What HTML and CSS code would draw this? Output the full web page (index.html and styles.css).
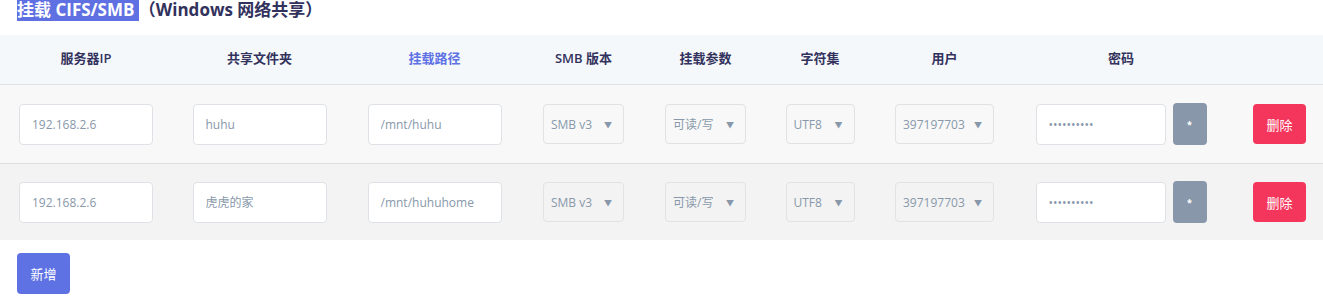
FILE: index.html
```html
<!DOCTYPE html>
<html lang="zh-CN">
<head>
    <meta charset="UTF-8">
    <meta name="viewport" content="width=device-width, initial-scale=1.0">
    <title>挂载 CIFS/SMB</title>
    <link rel="stylesheet" href="styles.css">
</head>
<body>
    <h2 class="page-title"><span class="title-mark">挂载 CIFS/SMB&nbsp;</span>（Windows 网络共享）</h2>

    <div class="mount-table">
        <div class="mount-head">
            <div class="head-cell">服务器IP</div>
            <div class="head-cell">共享文件夹</div>
            <div class="head-cell active">挂载路径</div>
            <div class="head-cell">SMB 版本</div>
            <div class="head-cell">挂载参数</div>
            <div class="head-cell">字符集</div>
            <div class="head-cell">用户</div>
            <div class="head-cell">密码</div>
            <div class="head-cell"></div>
        </div>

        <div class="mount-row">
            <div class="cell"><input class="field w-text" type="text" value="192.168.2.6"></div>
            <div class="cell"><input class="field w-text" type="text" value="huhu"></div>
            <div class="cell"><input class="field w-text" type="text" value="/mnt/huhu"></div>
            <div class="cell">
                <div class="select-wrap w-smb"><select class="choice"><option>SMB v3</option><option>SMB v2</option><option>SMB v1</option></select></div>
            </div>
            <div class="cell">
                <div class="select-wrap w-mode"><select class="choice"><option>可读/写</option><option>只读</option></select></div>
            </div>
            <div class="cell">
                <div class="select-wrap w-charset"><select class="choice"><option>UTF8</option><option>GBK</option></select></div>
            </div>
            <div class="cell">
                <div class="select-wrap w-user"><select class="choice"><option>397197703</option></select></div>
            </div>
            <div class="cell">
                <div class="pass-group">
                    <input class="field w-pass" type="password" value="1234567890">
                    <button class="btn btn-toggle">*</button>
                </div>
            </div>
            <div class="cell cell-end"><button class="btn btn-danger">删除</button></div>
        </div>

        <div class="mount-row alt">
            <div class="cell"><input class="field w-text" type="text" value="192.168.2.6"></div>
            <div class="cell"><input class="field w-text" type="text" value="虎虎的家"></div>
            <div class="cell"><input class="field w-text" type="text" value="/mnt/huhuhome"></div>
            <div class="cell">
                <div class="select-wrap w-smb"><select class="choice"><option>SMB v3</option><option>SMB v2</option><option>SMB v1</option></select></div>
            </div>
            <div class="cell">
                <div class="select-wrap w-mode"><select class="choice"><option>可读/写</option><option>只读</option></select></div>
            </div>
            <div class="cell">
                <div class="select-wrap w-charset"><select class="choice"><option>UTF8</option><option>GBK</option></select></div>
            </div>
            <div class="cell">
                <div class="select-wrap w-user"><select class="choice"><option>397197703</option></select></div>
            </div>
            <div class="cell">
                <div class="pass-group">
                    <input class="field w-pass" type="password" value="1234567890">
                    <button class="btn btn-toggle">*</button>
                </div>
            </div>
            <div class="cell cell-end"><button class="btn btn-danger">删除</button></div>
        </div>
    </div>

    <div class="footer-actions">
        <button class="btn btn-primary">新增</button>
    </div>
</body>
</html>
```

FILE: styles.css
```css
body {
    margin: 0;
    font-family: 'Open Sans', 'Noto Sans CJK SC', sans-serif;
    color: #32325d;
    background: #fff;
    overflow: hidden;
}
.page-title {
    margin: 0 0 15px;
    padding-left: 17px;
    font-size: 17px;
    line-height: 20px;
    font-weight: 700;
    color: #32325d;
}
.title-mark {
    background: #5f70e2;
    color: #fff;
}
.mount-head,
.mount-row {
    display: grid;
    grid-template-columns: 172px 175px 175px 123px 121px 108px 141px 212px 1fr;
    align-items: center;
    justify-items: center;
}
.mount-head {
    height: 49px;
    background: #f5f8fb;
    border-bottom: 1px solid #dfe2e6;
}
.head-cell {
    font-size: 13px;
    font-weight: 600;
    color: #32325d;
    padding-bottom: 4px;
}
.head-cell.active {
    color: #5e72e4;
}
.mount-row {
    padding: 18px 0;
    background: #f8f8f8;
    border-bottom: 1px solid #dedede;
}
.mount-row.alt {
    background: #f3f3f3;
    border-bottom: none;
    padding: 17px 0;
}
.cell-end {
    justify-self: end;
    padding-right: 17px;
}
.field {
    box-sizing: border-box;
    height: 41px;
    padding: 0 12px;
    border: 1px solid #dee2e6;
    border-radius: 4px;
    background: #fff;
    font-family: inherit;
    font-size: 12px;
    color: #8898aa;
    outline: none;
}
.w-text {
    width: 134px;
}
.w-pass {
    width: 130px;
}
.select-wrap {
    position: relative;
}
.select-wrap::after {
    content: '▼';
    position: absolute;
    right: 12px;
    top: 50%;
    transform: translateY(-50%);
    font-size: 8px;
    color: #8898aa;
    pointer-events: none;
}
.choice {
    appearance: none;
    -webkit-appearance: none;
    box-sizing: border-box;
    width: 100%;
    height: 40px;
    padding: 0 7px;
    border: 1px solid #e2e2e2;
    border-radius: 4px;
    background: transparent;
    font-family: inherit;
    font-size: 12px;
    color: #8898aa;
    outline: none;
}
.w-smb {
    width: 81px;
}
.w-mode {
    width: 81px;
}
.w-charset {
    width: 69px;
}
.w-user {
    width: 99px;
}
.pass-group {
    display: flex;
    align-items: center;
    gap: 7px;
}
.btn {
    border: none;
    border-radius: 4px;
    color: #fff;
    font-family: inherit;
    font-size: 13px;
    cursor: pointer;
}
.btn-toggle {
    width: 34px;
    height: 42px;
    background: #8898aa;
    font-size: 9px;
    font-weight: 700;
    padding: 0;
}
.btn-danger {
    width: 53px;
    height: 40px;
    background: #f5365c;
}
.btn-primary {
    width: 53px;
    height: 41px;
    background: #5e72e4;
}
.footer-actions {
    padding: 13px 17px 0;
}
```
